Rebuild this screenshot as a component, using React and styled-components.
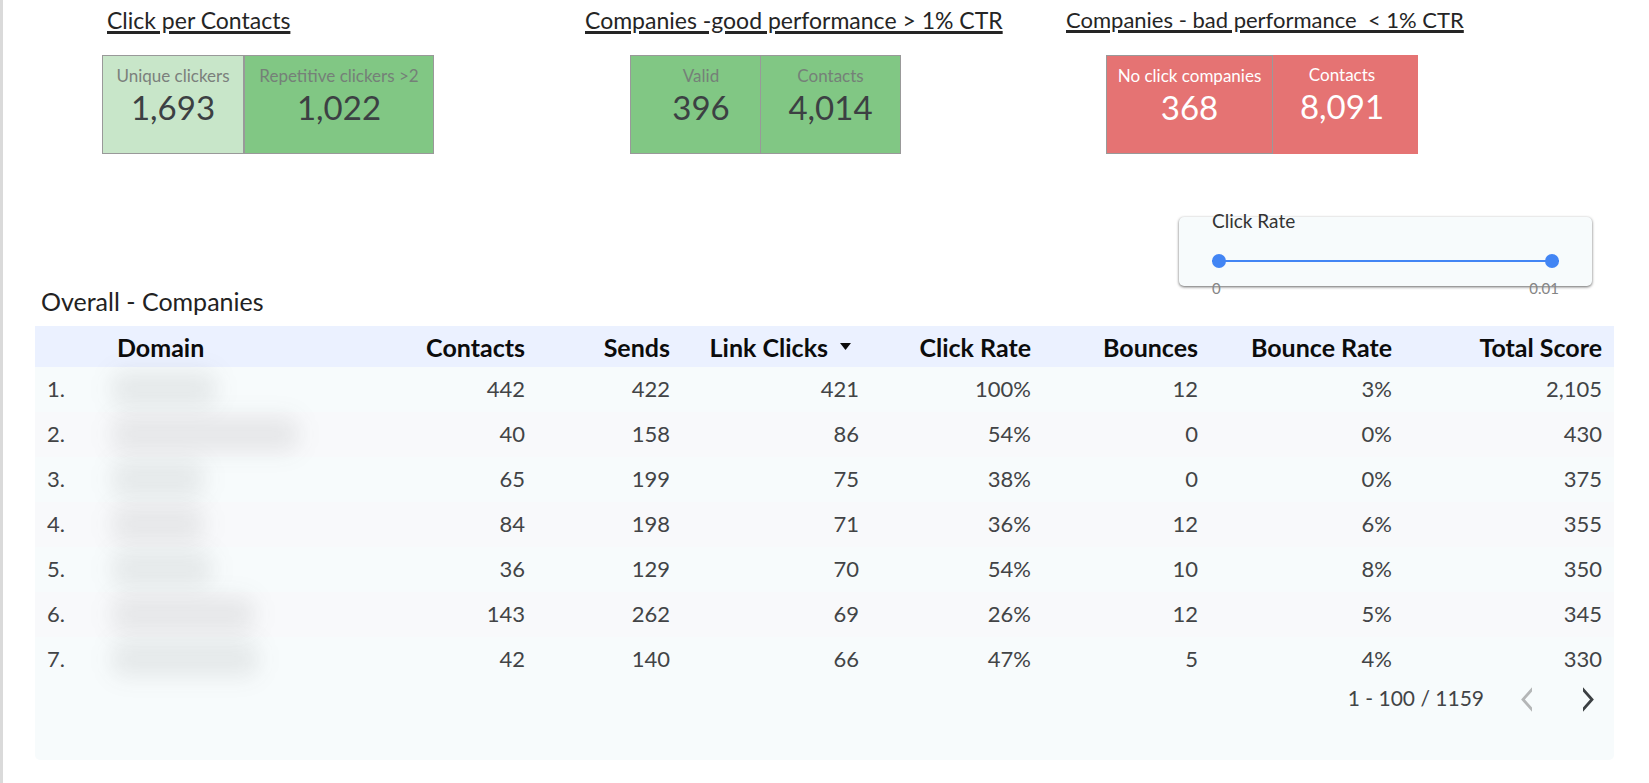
import { useState } from "react";
import styled, { createGlobalStyle } from "styled-components";

const GlobalStyle = createGlobalStyle`
  * {
    box-sizing: border-box;
  }
  body {
    margin: 0;
    background: #fff;
    color: #424446;
    font-family: Lato, "Open Sans", sans-serif;
  }
`;

const Page = styled.main`
  min-height: 100vh;
  padding: 5px 35px 23px 32px;
  border-left: 3px solid #dadada;
`;

const Summary = styled.section`
  display: grid;
  grid-template-columns: 483fr 481fr 548fr;
  padding-left: 67px;
`;

const GroupTitle = styled.h2`
  margin: 0 0 20px ${({ $indent }) => $indent || 0}px;
  color: #252525;
  font-size: ${({ $small }) => ($small ? 22 : 23)}px;
  font-weight: 400;
  line-height: 30px;
  text-decoration: underline;
  text-decoration-thickness: 3px;
  text-underline-offset: 2px;
  white-space: pre;
`;

const Cards = styled.div`
  display: flex;
  margin-left: ${({ $indent }) => $indent || 0}px;
`;

const tones = {
  light: { fondo: "#c8e6c9", label: "#7b807c", value: "#3c4043" },
  green: { fondo: "#81c784", label: "#758078", value: "#3c4043" },
  red: { fondo: "#e57373", label: "#fff", value: "#fff" },
};

const Card = styled.div`
  position: relative;
  z-index: ${({ $front }) => ($front ? 1 : 0)};
  width: ${({ $width }) => $width}px;
  height: 99px;
  margin-left: -${({ $overlap }) => $overlap || 0}px;
  padding-top: 8px;
  border: ${({ $flat }) => ($flat ? "0" : "1px solid #999")};
  background: ${({ $tone }) => tones[$tone].fondo};
  color: ${({ $tone }) => tones[$tone].value};
  text-align: center;
`;

const CardLabel = styled.div`
  color: ${({ $tone }) => tones[$tone].label};
  font-size: 17px;
  line-height: 24px;
  white-space: nowrap;
`;

const CardValue = styled.div`
  font-size: 33px;
  line-height: 38px;
`;

const Filters = styled.section`
  display: flex;
  justify-content: flex-end;
  margin-top: 63px;
  padding-right: 22px;
`;

// The label and the scale stick out of the box on purpose
const RangeCard = styled.div`
  display: flex;
  flex-direction: column;
  justify-content: center;
  width: 413px;
  height: 69px;
  padding: 4px 33px 0;
  border-radius: 5px;
  background: #f7fbfc;
  box-shadow: 0 1px 3px rgba(0, 0, 0, 0.6);
`;

const RangeLabel = styled.div`
  flex-shrink: 0;
  color: #333;
  font-size: 19px;
  line-height: 24px;
`;

const RangeTrack = styled.div`
  display: grid;
  flex-shrink: 0;
  align-items: center;
  height: 14px;
  margin: 21px 0 10px;
  background: linear-gradient(#4285f4, #4285f4) center / 100% 2px no-repeat;
`;

const RangeInput = styled.input`
  grid-area: 1 / 1;
  width: 100%;
  height: 14px;
  margin: 0;
  appearance: none;
  background: transparent;
  pointer-events: none;

  &::-webkit-slider-thumb {
    appearance: none;
    width: 14px;
    height: 14px;
    border-radius: 50%;
    background: #4285f4;
    pointer-events: auto;
    cursor: pointer;
  }
`;

const RangeScale = styled.div`
  display: flex;
  flex-shrink: 0;
  justify-content: space-between;
  color: #858585;
  font-size: 15px;
  line-height: 20px;
`;

const TableTitle = styled.h2`
  margin: 0 0 10px 6px;
  color: #222;
  font-size: 25px;
  font-weight: 400;
  line-height: 30px;
`;

const Panel = styled.section`
  overflow: hidden;
  border-radius: 0 0 5px 5px;
  background: #f7fbfc;
`;

const Table = styled.table`
  width: 100%;
  table-layout: fixed;
  border-collapse: collapse;
`;

const Th = styled.th`
  height: 41px;
  padding: 0 12px;
  background: #ebf1ff;
  color: #0c0c0c;
  font-size: 25px;
  font-weight: 700;
  line-height: 30px;
  text-align: ${({ $left }) => ($left ? "left" : "right")};
  white-space: nowrap;
`;

const SortButton = styled.button`
  display: inline-flex;
  align-items: center;
  gap: 12px;
  padding: 0 8px 0 0;
  border: 0;
  background: none;
  color: inherit;
  font: inherit;
  cursor: pointer;
`;

const Row = styled.tr`
  background: ${({ $alt }) => ($alt ? "#f8f9fb" : "#f7fbfc")};
`;

const Td = styled.td`
  height: 45px;
  padding: 0 12px 2px;
  font-size: 22px;
  line-height: 28px;
  text-align: ${({ $left }) => ($left ? "left" : "right")};
`;

const HiddenDomain = styled.span`
  display: block;
  width: ${({ $width }) => $width}px;
  height: 36px;
  margin-left: -6px;
  border-radius: 14px;
  background: rgba(60, 60, 60, 0.09);
  filter: blur(11px);
`;

const Footer = styled.footer`
  display: flex;
  justify-content: flex-end;
  gap: 22px;
  height: 78px;
  padding-right: 6px;
  font-size: 21px;
  line-height: 32px;
`;

const PageButton = styled.button`
  display: flex;
  align-items: center;
  justify-content: center;
  width: 40px;
  height: 34px;
  padding: 0;
  border: 0;
  background: none;
  color: #3c4043;
  cursor: pointer;

  &:disabled {
    color: #b4b6b7;
    cursor: default;
  }
`;

const groups = [
  {
    title: "Click per Contacts",
    titleIndent: 5,
    cards: [
      { label: "Unique clickers", value: "1,693", tone: "light", width: 142 },
      { label: "Repetitive clickers >2", value: "1,022", tone: "green", width: 190 },
    ],
  },
  {
    title: "Companies -good performance > 1% CTR",
    indent: 45,
    cards: [
      { label: "Valid", value: "396", tone: "green", width: 142 },
      { label: "Contacts", value: "4,014", tone: "green", width: 141, overlap: 12 },
    ],
  },
  {
    title: "Companies - bad performance  < 1% CTR",
    small: true,
    indent: 40,
    cards: [
      { label: "No click companies", value: "368", tone: "red", width: 167, front: true },
      { label: "Contacts", value: "8,091", tone: "red", width: 152, overlap: 7, flat: true },
    ],
  },
];

const columns = [
  { name: "", width: 70 },
  { name: "Domain", left: true },
  { name: "Contacts", width: 137 },
  { name: "Sends", width: 145 },
  { name: "Link Clicks", width: 189, sorted: true },
  { name: "Click Rate", width: 172 },
  { name: "Bounces", width: 167 },
  { name: "Bounce Rate", width: 194 },
  { name: "Total Score", width: 210 },
];

const rows = [
  { domain: 106, data: ["442", "422", "421", "100%", "12", "3%", "2,105"] },
  { domain: 188, data: ["40", "158", "86", "54%", "0", "0%", "430"] },
  { domain: 94, data: ["65", "199", "75", "38%", "0", "0%", "375"] },
  { domain: 94, data: ["84", "198", "71", "36%", "12", "6%", "355"] },
  { domain: 102, data: ["36", "129", "70", "54%", "10", "8%", "350"] },
  { domain: 144, data: ["143", "262", "69", "26%", "12", "5%", "345"] },
  { domain: 148, data: ["42", "140", "66", "47%", "5", "4%", "330"] },
];

function ClickRateFilter() {
  const [min, setMin] = useState(0);
  const [max, setMax] = useState(0.01);

  return (
    <RangeCard role="group" aria-labelledby="click-rate">
      <RangeLabel id="click-rate">Click Rate</RangeLabel>
      <RangeTrack>
        <RangeInput
          type="range"
          aria-label="Click Rate min"
          min="0"
          max="0.01"
          step="0.001"
          value={min}
          onChange={(e) => setMin(Math.min(Number(e.target.value), max))}
        />
        <RangeInput
          type="range"
          aria-label="Click Rate max"
          min="0"
          max="0.01"
          step="0.001"
          value={max}
          onChange={(e) => setMax(Math.max(Number(e.target.value), min))}
        />
      </RangeTrack>
      <RangeScale>
        <span>{min}</span>
        <span>{max}</span>
      </RangeScale>
    </RangeCard>
  );
}

function CompaniesTable() {
  return (
    <Panel>
      <Table aria-labelledby="companies-title">
        <colgroup>
          {columns.map((col) => (
            <col key={col.name} width={col.width} />
          ))}
        </colgroup>
        <thead>
          <tr>
            {columns.map((col) => (
              <Th key={col.name} $left={col.left} scope="col">
                {col.sorted ? (
                  <SortButton type="button">
                    {col.name}
                    <svg width="11" height="7" viewBox="0 0 11 7" aria-hidden="true">
                      <path d="M0 0h11L5.5 7z" fill="currentColor" />
                    </svg>
                  </SortButton>
                ) : (
                  col.name
                )}
              </Th>
            ))}
          </tr>
        </thead>
        <tbody>
          {rows.map((row, i) => (
            <Row key={i} $alt={i % 2 === 1}>
              <Td $left>{i + 1}.</Td>
              <Td $left>
                <HiddenDomain $width={row.domain} />
              </Td>
              {row.data.map((value, j) => (
                <Td key={j}>{value}</Td>
              ))}
            </Row>
          ))}
        </tbody>
      </Table>
      <Footer>
        <span>1 - 100 / 1159</span>
        <PageButton type="button" aria-label="Previous page" disabled>
          <svg width="11" height="25" viewBox="0 0 11 25" fill="none" aria-hidden="true">
            <path d="M14 -1L2 12.5L14 26" stroke="currentColor" strokeWidth="2.8" />
          </svg>
        </PageButton>
        <PageButton type="button" aria-label="Next page">
          <svg width="11" height="25" viewBox="0 0 11 25" fill="none" aria-hidden="true">
            <path d="M-3 -1L9 12.5L-3 26" stroke="currentColor" strokeWidth="2.8" />
          </svg>
        </PageButton>
      </Footer>
    </Panel>
  );
}

export default function App() {
  return (
    <Page>
      <GlobalStyle />
      <Summary>
        {groups.map((group) => (
          <div key={group.title}>
            <GroupTitle $indent={group.titleIndent} $small={group.small}>
              {group.title}
            </GroupTitle>
            <Cards $indent={group.indent}>
              {group.cards.map((card) => (
                <Card
                  key={card.label}
                  $tone={card.tone}
                  $width={card.width}
                  $overlap={card.overlap}
                  $front={card.front}
                  $flat={card.flat}
                >
                  <CardLabel $tone={card.tone}>{card.label}</CardLabel>
                  <CardValue>{card.value}</CardValue>
                </Card>
              ))}
            </Cards>
          </div>
        ))}
      </Summary>
      <Filters>
        <ClickRateFilter />
      </Filters>
      <TableTitle id="companies-title">Overall - Companies</TableTitle>
      <CompaniesTable />
    </Page>
  );
}
